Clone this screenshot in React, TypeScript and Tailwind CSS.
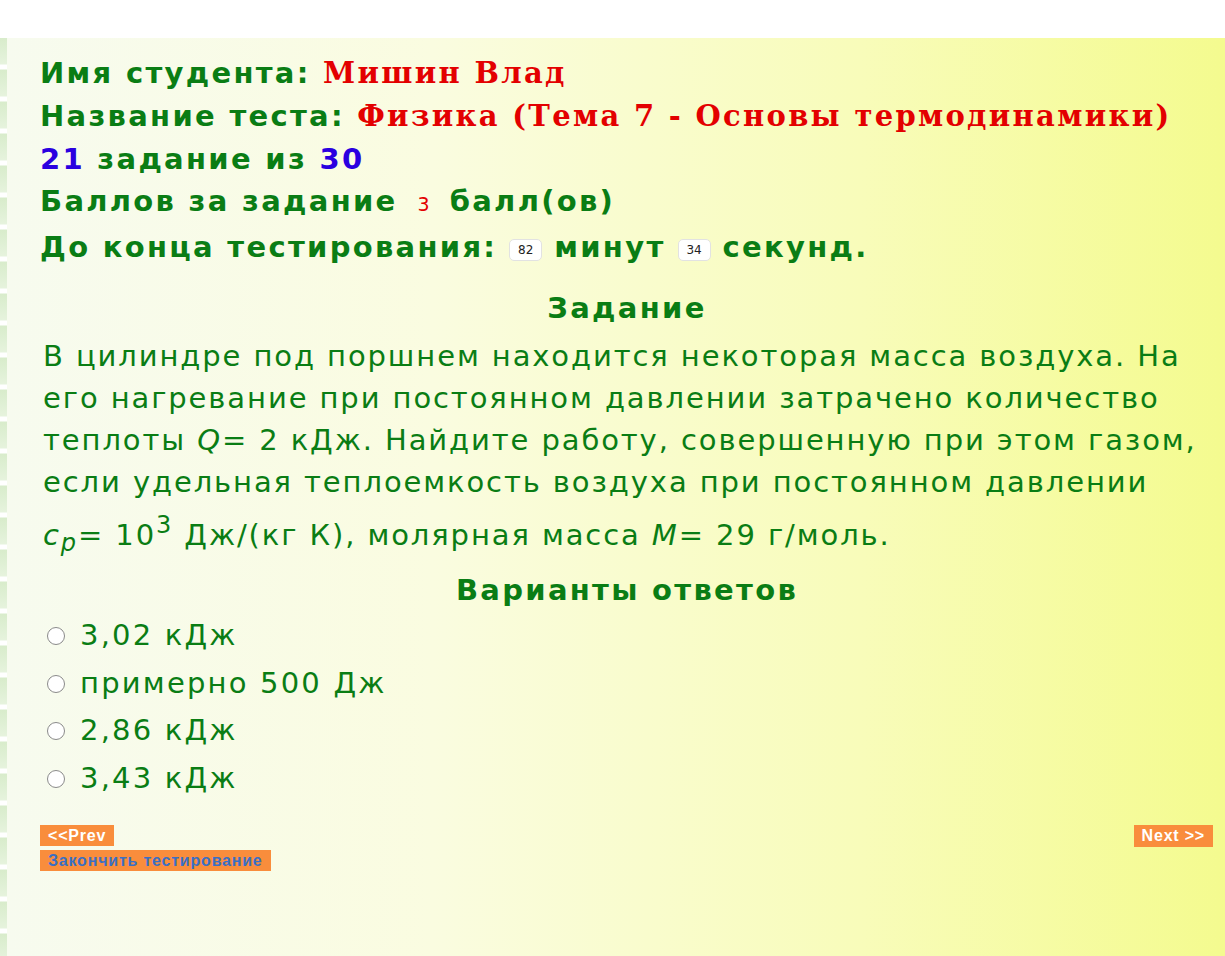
import React from "react";

const Badge = ({ v }: { v: string }) => (
  <span className="mx-[12px] inline-flex h-[22px] w-[33px] items-center justify-center rounded-[5px] border border-[#e2e2e2] bg-white align-[3px] text-[12px] font-normal tracking-normal text-[#222] [font-family:'DejaVu_Sans',sans-serif]">
    {v}
  </span>
);

const Radio = () => (
  <span className="mr-[15px] inline-block h-[18px] w-[18px] shrink-0 rounded-full border-[1.5px] border-[#8a8a8a] bg-white" />
);

export default function App() {
  const opts = ["3,02 кДж", "примерно 500 Дж", "2,86 кДж", "3,43 кДж"];
  const serif = "[font-family:'DejaVu_Serif',Georgia,serif] tracking-[2.3px] text-[#e30000]";
  return (
    <div className="min-h-[956px] w-full bg-white [font-family:'DejaVu_Sans',Verdana,sans-serif]">
      <div className="h-[38px] bg-white" />
      <div className="flex min-h-[918px]">
        <div className="w-[7px] shrink-0 bg-[repeating-linear-gradient(180deg,#d8eccb_0px,#e6f3dd_26px,#ffffff_27px,#ffffff_31px,#d8eccb_32px)]" />
        <div className="flex-1 bg-[linear-gradient(90deg,#f7fbef_0%,#fafce0_35%,#f8fcba_70%,#f4fb8f_100%)] pl-[33px] pr-[11px] pt-[14px]">
          <div className="text-[29px] font-bold leading-[42.75px] tracking-[2.3px] text-[#0a7d14]">
            <div>
              Имя студента: <span className={serif}>Мишин Влад</span>
            </div>
            <div>
              Название теста: <span className={serif}>Физика (Тема 7 - Основы термодинамики)</span>
            </div>
            <div>
              <span className="text-[#2a00e0]">21</span> задание из <span className="text-[#2a00e0]">30</span>
            </div>
            <div>
              Баллов за задание
              <span className="mx-[20px] text-[19px] font-normal tracking-normal text-[#e30000]">3</span>
              балл(ов)
            </div>
            <div>
              До конца тестирования:
              <Badge v="82" />
              минут
              <Badge v="34" />
              секунд.
            </div>
          </div>

          <div className="mt-[18px] text-center text-[29px] font-bold leading-[43px] tracking-[2.3px] text-[#0a7d14]">
            Задание
          </div>
          <div className="mt-[5px] whitespace-nowrap pl-[3px] text-[29px] leading-[42px] tracking-[1.9px] text-[#0a7d14]">
            <div>В цилиндре под поршнем находится некоторая масса воздуха. На</div>
            <div>его нагревание при постоянном давлении затрачено количество</div>
            <div>
              теплоты <i>Q</i>= 2 кДж. Найдите работу, совершенную при этом газом,
            </div>
            <div>если удельная теплоемкость воздуха при постоянном давлении</div>
            <div className="leading-[64px]">
              <i>c</i>
              <sub className="text-[24px] italic">p</sub>= 10<sup className="text-[24px]">3</sup> Дж/(кг К), молярная
              масса <i>M</i>= 29 г/моль.
            </div>
          </div>
          <div className="mt-[2px] text-center text-[29px] font-bold leading-[43px] tracking-[2.3px] text-[#0a7d14]">
            Варианты ответов
          </div>
          <div className="flex flex-col">
            {opts.map((o, i) => (
              <div
                key={o}
                className={`flex items-center pl-[7px] text-[29px] tracking-[2.2px] text-[#0a7d14] ${i === 0 ? "h-[48px]" : "h-[47.5px]"}`}
              >
                <Radio />
                <span>{o}</span>
              </div>
            ))}
          </div>

          <div className="mt-[23px] flex items-start justify-between [font-family:'Liberation_Sans',Arial,sans-serif]">
            <div className="flex flex-col items-start gap-[4px]">
              <span className="bg-[#f98d3c] px-[8px] text-[16px] font-bold leading-[21px] tracking-[0.8px] text-white">
                &lt;&lt;Prev
              </span>
              <span className="bg-[#f98d3c] px-[8px] text-[16px] font-bold leading-[21px] tracking-[0.8px] text-[#3a6fc4]">
                Закончить тестирование
              </span>
            </div>
            <span className="mr-[1px] bg-[#f98d3c] px-[8px] text-[16px] font-bold leading-[22px] tracking-[0.8px] text-white">
              Next &gt;&gt;
            </span>
          </div>
        </div>
      </div>
    </div>
  );
}
